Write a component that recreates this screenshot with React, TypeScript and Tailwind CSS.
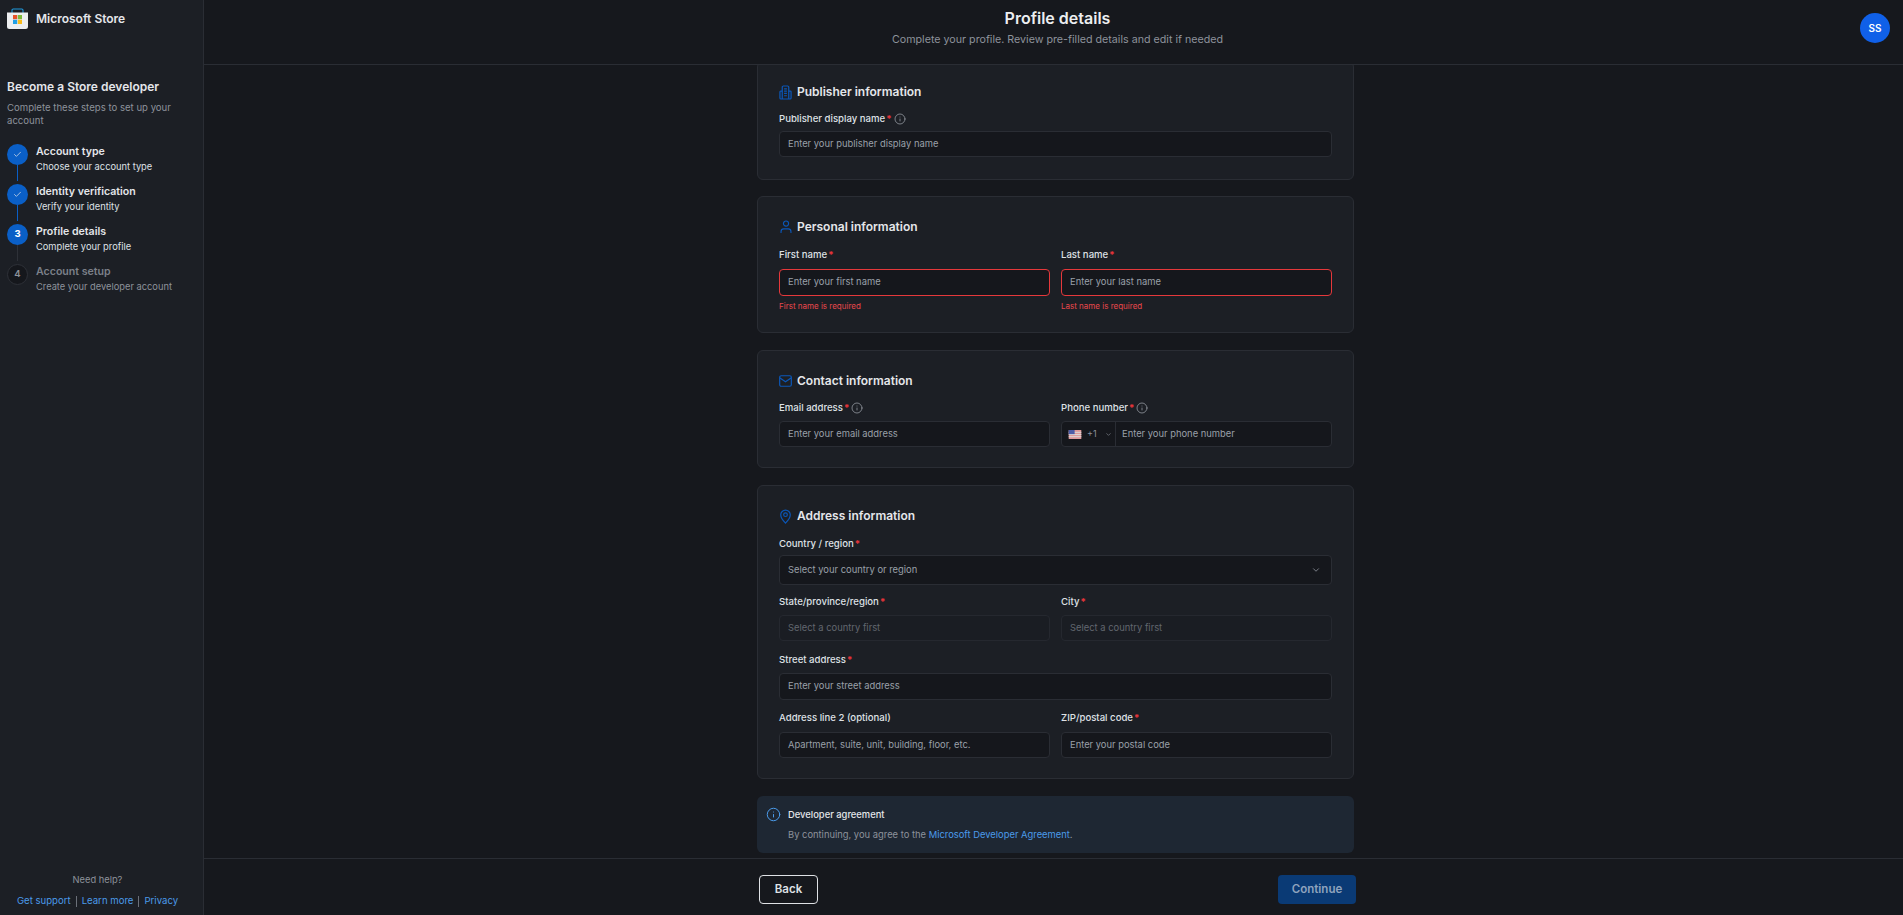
import type { ReactNode } from "react";
import { Check, ChevronDown, Info } from "lucide-react";

const steps = [
  { title: "Account type", sub: "Choose your account type", state: "done" },
  { title: "Identity verification", sub: "Verify your identity", state: "done" },
  { title: "Profile details", sub: "Complete your profile", state: "active" },
  { title: "Account setup", sub: "Create your developer account", state: "todo" },
];

function StoreLogo() {
  return (
    <svg viewBox="0 0 21 21" className="h-[21px] w-[21px] shrink-0" aria-hidden>
      <path d="M5 5V2.2C5 1.5 5.5 1 6.2 1h8.6c.7 0 1.2.5 1.2 1.2V5" fill="none" stroke="#1e9be0" strokeWidth="1.1" />
      <path d="M0 4.5h21v14a2.5 2.5 0 0 1-2.5 2.5h-16A2.5 2.5 0 0 1 0 18.5z" fill="#eceef0" />
      <rect x="6" y="7" width="4.2" height="4.2" fill="#e8532a" />
      <rect x="10.8" y="7" width="4.2" height="4.2" fill="#7db93a" />
      <rect x="6" y="11.8" width="4.2" height="4.2" fill="#1f9fe6" />
      <rect x="10.8" y="11.8" width="4.2" height="4.2" fill="#f9bb1c" />
    </svg>
  );
}

function BuildingIcon() {
  return (
    <svg viewBox="0 0 14 16" className="h-[15px] w-[13px]" fill="none" stroke="#0b57b8" strokeWidth="1.3" aria-hidden>
      <path d="M3.5 15V2.2C3.5 1.5 4 1 4.7 1h4.6c.7 0 1.2.5 1.2 1.2V15" />
      <path d="M3.5 6.5H1.8c-.5 0-.8.3-.8.8V14c0 .6.4 1 1 1h10c.6 0 1-.4 1-1V7.3c0-.5-.3-.8-.8-.8h-1.7" />
      <path d="M5.5 4h3M5.5 6.5h3M5.5 9h3M5.5 11.5h3" />
    </svg>
  );
}

function PersonIcon() {
  return (
    <svg viewBox="0 0 14 16" className="h-[14px] w-[12px]" fill="none" stroke="#0b57b8" strokeWidth="1.3" aria-hidden>
      <circle cx="7" cy="4" r="3" />
      <path d="M1.2 15v-1.6c0-2 1.4-3.2 3.2-3.2h5.2c1.8 0 3.2 1.2 3.2 3.2V15" />
    </svg>
  );
}

function MailIcon() {
  return (
    <svg viewBox="0 0 14 13" className="h-[12px] w-[13px]" fill="none" stroke="#0b57b8" strokeWidth="1.3" aria-hidden>
      <rect x="0.7" y="0.8" width="12.6" height="11.4" rx="1.6" />
      <path d="M1 3.2 7 7.4l6-4.2" />
    </svg>
  );
}

function PinIcon() {
  return (
    <svg viewBox="0 0 12 16" className="h-[15px] w-[11px]" fill="none" stroke="#0b57b8" strokeWidth="1.3" aria-hidden>
      <path d="M6 15.2C3.5 12.8.8 9.8.8 6.2a5.2 5.2 0 0 1 10.4 0c0 3.6-2.7 6.6-5.2 9z" />
      <circle cx="6" cy="6" r="2" />
    </svg>
  );
}

function UsFlag() {
  return (
    <svg viewBox="0 0 14 10" className="h-[9px] w-[14px] opacity-90" aria-hidden>
      <rect width="14" height="10" fill="#f4a8a8" />
      <rect y="2" width="14" height="1.2" fill="#f3eaea" />
      <rect y="4.4" width="14" height="1.2" fill="#f3eaea" />
      <rect y="6.8" width="14" height="1.2" fill="#f3eaea" />
      <rect width="6.6" height="4.6" fill="#5566b8" />
    </svg>
  );
}

function SectionCard({ icon, title, children, className }: { icon: ReactNode; title: string; children: ReactNode; className?: string }) {
  return (
    <section className={`shrink-0 rounded-[6px] border border-[#2a2d34] bg-[#1c1f25] px-[21px] pt-[20px] ${className ?? "pb-[20px]"}`}>
      <h2 className="flex h-[20px] items-center gap-[5px] text-[12px] font-semibold text-[#e4e6ea]">
        <span className="flex w-[13px] justify-center">{icon}</span>
        {title}
      </h2>
      {children}
    </section>
  );
}

function Label({ text, required = true, info = false }: { text: string; required?: boolean; info?: boolean }) {
  return (
    <div className="flex h-[14px] items-center text-[9.6px] font-medium text-[#dfe1e5]">
      {text}
      {required && <span className="ml-[1px] font-bold text-[#e5343a]">*</span>}
      {info && <Info className="ml-[2px] h-[12px] w-[12px] text-[#9ba0a8]" strokeWidth={1.5} />}
    </div>
  );
}

function TextBox({ placeholder, error, disabled, short, gap }: { placeholder: string; error?: boolean; disabled?: boolean; short?: boolean; gap?: string }) {
  return (
    <div
      className={`flex items-center rounded-[4px] border px-[8px] text-[9.4px] ${gap ?? "mt-[6px]"} ${short ? "h-[26px]" : "h-[27px]"} ${
        error ? "border-[#e5383b]" : disabled ? "border-[#25282f]" : "border-[#2a2d34]"
      } ${disabled ? "bg-[#1a1d23] text-[#62676f]" : "bg-[#15171c] text-[#9aa0a9]"}`}
    >
      {placeholder}
    </div>
  );
}

function Field({ label, required, info, placeholder, error, disabled, short, gap, className }: {
  label: string;
  required?: boolean;
  info?: boolean;
  placeholder: string;
  error?: string;
  disabled?: boolean;
  short?: boolean;
  gap?: string;
  className?: string;
}) {
  return (
    <div className={className}>
      <Label text={label} required={required} info={info} />
      <TextBox placeholder={placeholder} error={!!error} disabled={disabled} short={short} gap={gap} />
      {error && <p className="mt-[4px] h-[12px] text-[8px] leading-[12px] text-[#e8484c]">{error}</p>}
    </div>
  );
}

export default function App() {
  return (
    <div className="flex h-[915px] w-[1903px] overflow-hidden bg-[#16181d] font-['Inter',sans-serif] text-white">
      <aside className="flex w-[204px] shrink-0 flex-col border-r border-[#2a2d34] bg-[#1c1f25] pl-[7px] pr-[12px]">
        <div className="flex h-[29px] items-center gap-[8px] pt-[8px]">
          <StoreLogo />
          <span className="text-[12px] font-semibold text-[#e4e6ea]">Microsoft Store</span>
        </div>
        <h1 className="mt-[49px] text-[12px] font-semibold leading-[18px] text-[#e4e6ea]">Become a Store developer</h1>
        <p className="mt-[5px] pr-[20px] text-[9.6px] leading-[13px] text-[#8d929b]">Complete these steps to set up your account</p>
        <ol className="mt-[17px] flex flex-col">
          {steps.map((step, i) => (
            <li key={step.title} className="flex h-[40px] gap-[8px]">
              <div className="flex w-[21px] flex-col items-center">
                {step.state === "done" && (
                  <span className="flex h-[21px] w-[21px] items-center justify-center rounded-full bg-[#0a5fc7]">
                    <Check className="h-[9px] w-[9px] text-[#d5dde8]" strokeWidth={2} />
                  </span>
                )}
                {step.state === "active" && (
                  <span className="flex h-[21px] w-[21px] items-center justify-center rounded-full bg-[#0a5fc7] text-[9.6px] font-bold text-white">3</span>
                )}
                {step.state === "todo" && (
                  <span className="flex h-[21px] w-[21px] items-center justify-center rounded-full border border-[#2e3138] bg-[#15171c] text-[9.6px] font-semibold text-[#8d929b]">4</span>
                )}
                {i < 3 && <span className={`h-[16px] w-px ${i < 2 ? "bg-[#0a5fc7]" : "bg-[#2e3138]"}`} />}
              </div>
              <div>
                <div className={`text-[10.6px] font-semibold leading-[16px] ${step.state === "todo" ? "text-[#7b8089]" : "text-[#e4e6ea]"}`}>{step.title}</div>
                <div className={`text-[9.3px] leading-[14px] ${step.state === "todo" ? "text-[#8d929b]" : "text-[#dfe1e5]"}`}>{step.sub}</div>
              </div>
            </li>
          ))}
        </ol>
        <div className="mt-auto flex flex-col items-center pb-[7px] pr-[3px]">
          <span className="text-[9.3px] leading-[14px] text-[#8d929b]">Need help?</span>
          <div className="mt-[7px] flex items-center gap-[5px] text-[9.6px] leading-[14px] text-[#4b9bea]">
            <span>Get support</span>
            <span className="h-[11px] w-px bg-[#6b7079]" />
            <span>Learn more</span>
            <span className="h-[11px] w-px bg-[#6b7079]" />
            <span>Privacy</span>
          </div>
        </div>
      </aside>

      <div className="flex min-w-0 flex-1 flex-col">
        <header className="grid h-[65px] shrink-0 grid-cols-[1fr_auto_1fr] border-b border-[#2a2d34] pl-[21px] pr-[13px]">
          <div />
          <div className="flex flex-col items-center pt-[8px]">
            <span className="text-[16px] font-semibold leading-[21px] text-[#eceef0]">Profile details</span>
            <span className="mt-[3px] text-[10.7px] leading-[16px] text-[#8d929b]">Complete your profile. Review pre-filled details and edit if needed</span>
          </div>
          <div className="flex justify-end pt-[13px]">
            <span className="flex h-[30px] w-[30px] items-center justify-center rounded-full bg-[#1060e8] text-[10px] font-semibold">SS</span>
          </div>
        </header>

        <main className="flex min-h-0 flex-1 flex-col justify-end overflow-hidden pb-[5px] pl-[4px]">
          <div className="mx-auto flex w-[597px] flex-col gap-[17px]">
            <SectionCard icon={<BuildingIcon />} title="Publisher information" className="pb-[22px]">
              <div className="mt-[10px]">
                <Field label="Publisher display name" info short gap="mt-[5px]" placeholder="Enter your publisher display name" />
              </div>
            </SectionCard>

            <SectionCard icon={<PersonIcon />} title="Personal information" className="-mt-[1px] pb-[20px]">
              <div className="mt-[11px] grid grid-cols-2 gap-x-[11px]">
                <Field label="First name" gap="mt-[7px]" placeholder="Enter your first name" error="First name is required" />
                <Field label="Last name" gap="mt-[7px]" placeholder="Enter your last name" error="Last name is required" />
              </div>
            </SectionCard>

            <SectionCard icon={<MailIcon />} title="Contact information">
              <div className="mt-[10px] grid grid-cols-2 gap-x-[11px]">
                <Field label="Email address" info short placeholder="Enter your email address" />
                <div>
                  <Label text="Phone number" info />
                  <div className="mt-[6px] flex h-[26px] items-center rounded-[4px] border border-[#2a2d34] bg-[#15171c] text-[9.4px] text-[#9aa0a9]">
                    <div className="flex h-full w-[54px] shrink-0 items-center border-r border-[#2a2d34] pl-[6px]">
                      <UsFlag />
                      <span className="ml-[5px] text-[9px] text-[#8d929b]">+1</span>
                      <ChevronDown className="ml-[8px] h-[7px] w-[7px] text-[#8d929b]" />
                    </div>
                    <span className="pl-[6px]">Enter your phone number</span>
                  </div>
                </div>
              </div>
            </SectionCard>

            <SectionCard icon={<PinIcon />} title="Address information">
              <div className="mt-[11px]">
                <Label text="Country / region" />
                <div className="mt-[4px] flex h-[30px] items-center justify-between rounded-[4px] border border-[#2a2d34] bg-[#15171c] pl-[8px] pr-[10px] text-[9.4px] text-[#9aa0a9]">
                  <span>Select your country or region</span>
                  <ChevronDown className="h-[10px] w-[10px] text-[#8d929b]" />
                </div>
              </div>
              <div className="mt-[10px] grid grid-cols-2 gap-x-[11px]">
                <Field label="State/province/region" short placeholder="Select a country first" disabled />
                <Field label="City" short placeholder="Select a country first" disabled />
              </div>
              <Field label="Street address" placeholder="Enter your street address" className="mt-[12px]" />
              <div className="mt-[11px] grid grid-cols-2 gap-x-[11px]">
                <Field label="Address line 2 (optional)" required={false} short gap="mt-[7px]" placeholder="Apartment, suite, unit, building, floor, etc." />
                <Field label="ZIP/postal code" short gap="mt-[7px]" placeholder="Enter your postal code" />
              </div>
            </SectionCard>

            <section className="flex h-[57px] shrink-0 gap-[7px] rounded-[6px] bg-[#1e2733] pl-[9px] pt-[11px]">
              <Info className="h-[15px] w-[15px] shrink-0 text-[#4b9bea]" strokeWidth={1.6} />
              <div className="pt-[1px]">
                <div className="text-[9.4px] font-medium leading-[14px] text-[#e4e6ea]">Developer agreement</div>
                <p className="mt-[6px] text-[9.4px] leading-[14px] text-[#8d929b]">
                  By continuing, you agree to the <span className="text-[#4b9bea]">Microsoft Developer Agreement</span>.
                </p>
              </div>
            </section>
          </div>
        </main>

        <footer className="flex h-[57px] shrink-0 items-start justify-center border-t border-[#2a2d34] pl-[8px] pt-[16px]">
          <div className="flex w-[597px] justify-between">
            <button className="h-[29px] w-[59px] rounded-[4px] border border-[#dfe1e5] text-[11.5px] font-semibold text-[#dfe1e5]">Back</button>
            <button className="h-[29px] w-[78px] rounded-[4px] bg-[#0a3a75] text-[11.5px] font-semibold text-[#8fa3bd]">Continue</button>
          </div>
        </footer>
      </div>
    </div>
  );
}
